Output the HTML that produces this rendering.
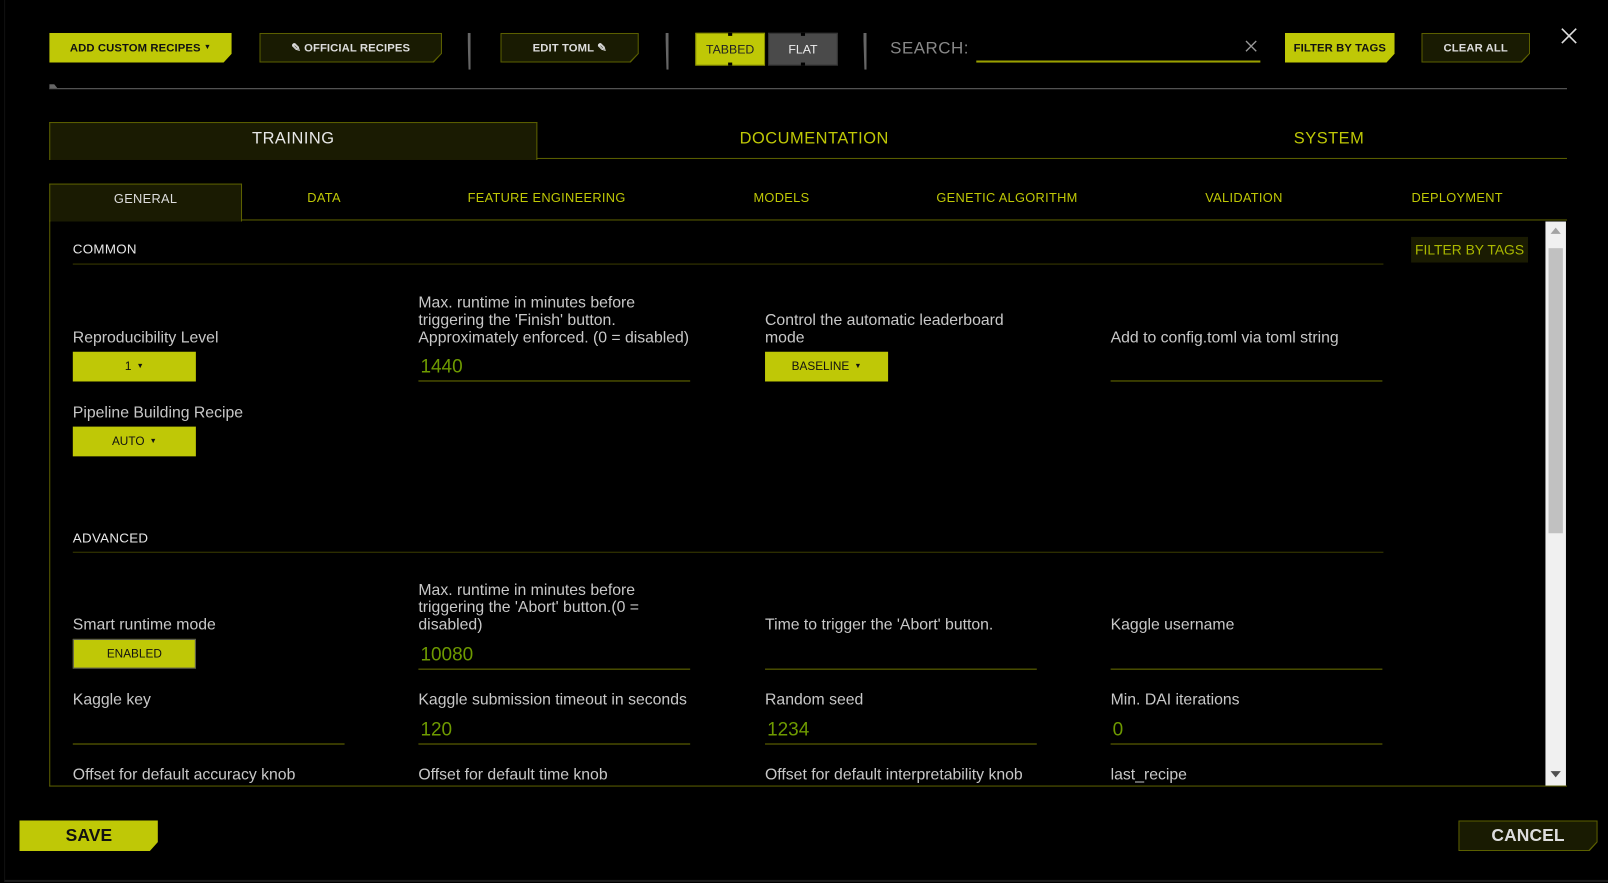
<!DOCTYPE html>
<html><head><meta charset="utf-8"><style>
*{margin:0;padding:0;box-sizing:border-box}
body{width:1608px;height:883px;background:#000;overflow:hidden;position:relative;font-family:"Liberation Sans Narrow","Liberation Sans",sans-serif;color:#ccc}
#w{position:absolute;left:0;top:0;width:1568px;height:861px;transform:scale(1.02551);transform-origin:0 0}
.a{position:absolute}
.btn{position:absolute;height:29px;font-size:11px;font-weight:bold;display:flex;align-items:center;justify-content:center;letter-spacing:0.1px;clip-path:polygon(0 0,100% 0,100% 70%,calc(100% - 8px) 100%,0 100%)}
.lime{background:#bfc806;color:#111}
.dark{background:#5c6000;color:#ddd}
.dark span{position:absolute;inset:1px;background:#191b02;display:flex;align-items:center;justify-content:center;clip-path:polygon(0 0,100% 0,100% 70%,calc(100% - 8px) 100%,0 100%)}
.sep{position:absolute;width:3px;height:36px;top:32px;background:#666;clip-path:polygon(0 0,100% 0,100% 100%,30% 100%,0 20%)}
.tab{position:absolute;font-size:16px;color:#bfc806;letter-spacing:0.5px;width:300px;text-align:center}
.st{position:absolute;font-size:12.5px;color:#bfc806;letter-spacing:0.3px;width:300px;text-align:center}
.lbl{position:absolute;font-family:"Liberation Sans",sans-serif;font-size:15.4px;line-height:17px;color:#c8c8c8;width:266px}
.ul{position:absolute;height:1px;background:#6b7000;width:265px}
.val{position:absolute;font-family:"Liberation Sans",sans-serif;font-size:18.5px;color:#6e9a00}
.sel{position:absolute;width:120px;height:29px;background:#bfc806;color:#111;font-size:11.5px;display:flex;align-items:center;justify-content:center}
.hd{position:absolute;font-size:13px;color:#e8e8e8;letter-spacing:0.3px}
</style></head><body>
<div id="w">
<div class="a" style="left:4px;top:0;width:1564px;height:860px;border-bottom:2px solid #1c1c1c;border-left:1px solid #111"></div>

<div class="btn lime" style="left:48px;top:32px;width:178px">ADD CUSTOM RECIPES&nbsp;<span style="font-size:7px">▼</span></div>
<div class="btn dark" style="left:253px;top:32px;width:178px"><span>✎ OFFICIAL RECIPES</span></div>
<div class="sep" style="left:456px"></div>
<div class="btn dark" style="left:488px;top:32px;width:135px"><span>EDIT TOML ✎</span></div>
<div class="sep" style="left:649px"></div>
<div class="a" style="left:678px;top:32px;width:68px;height:32px;background:#bfc806;border:1px solid #8a9000;color:#222;font-size:12px;display:flex;align-items:center;justify-content:center">TABBED</div>
<div class="a" style="left:749px;top:32px;width:68px;height:32px;background:#4a4a4a;border:1px solid #333;color:#eee;font-size:12px;display:flex;align-items:center;justify-content:center">FLAT</div>
<div class="a" style="left:710px;top:32px;width:4px;height:3px;background:#000"></div>
<div class="a" style="left:710px;top:61px;width:4px;height:3px;background:#000"></div>
<div class="a" style="left:781px;top:32px;width:4px;height:3px;background:#000"></div>
<div class="a" style="left:781px;top:61px;width:4px;height:3px;background:#000"></div>
<div class="sep" style="left:842px"></div>
<div class="a" style="left:868px;top:38px;font-size:16.5px;color:#888;letter-spacing:0.5px">SEARCH:</div>
<div class="a" style="left:952px;top:59px;width:277px;height:2px;background:#9aa000"></div>
<svg class="a" style="left:1214px;top:39px" width="12" height="12"><path d="M1 1L11 11M11 1L1 11" stroke="#999" stroke-width="1.3"/></svg>
<div class="btn lime" style="left:1253px;top:32px;width:107px">FILTER BY TAGS</div>
<div class="btn dark" style="left:1386px;top:32px;width:106px"><span>CLEAR ALL</span></div>
<svg class="a" style="left:1522px;top:27px" width="16" height="16"><path d="M1 1L15 15M15 1L1 15" stroke="#ddd" stroke-width="1.6"/></svg>
<div class="a" style="left:48px;top:86px;width:1480px;height:1px;background:#666"></div>
<div class="a" style="left:48px;top:82px;width:8px;height:4px;background:#666;clip-path:polygon(0 0,60% 0,100% 100%,0 100%)"></div>

<div class="a" style="left:48px;top:119px;width:476px;height:37px;background:#1a1b02;border:1px solid #5c6000;border-bottom:none"></div>
<div class="a" style="left:523px;top:154px;width:1005px;height:1px;background:#5c6000"></div>
<div class="tab" style="left:136px;top:127px;color:#e8e8e8">TRAINING</div>
<div class="tab" style="left:644px;top:127px">DOCUMENTATION</div>
<div class="tab" style="left:1146px;top:127px">SYSTEM</div>

<div class="a" style="left:48px;top:179px;width:188px;height:37px;background:#1a1b02;border:1px solid #5c6000;border-bottom:none"></div>
<div class="a" style="left:235px;top:214px;width:1293px;height:1px;background:#5c6000"></div>
<div class="st" style="left:-8px;top:187px;color:#ddd">GENERAL</div>
<div class="st" style="left:166px;top:186px">DATA</div>
<div class="st" style="left:383px;top:186px">FEATURE ENGINEERING</div>
<div class="st" style="left:612px;top:186px">MODELS</div>
<div class="st" style="left:832px;top:186px">GENETIC ALGORITHM</div>
<div class="st" style="left:1063px;top:186px">VALIDATION</div>
<div class="st" style="left:1271px;top:186px">DEPLOYMENT</div>

<div class="a" style="left:48px;top:215px;width:1480px;height:552px;border-left:1px solid #5c6000;border-bottom:1px solid #5c6000"></div>
<div class="a" style="left:1507px;top:216px;width:20px;height:550px;background:#f0f0f0"></div>
<div class="a" style="left:1510px;top:242px;width:14px;height:278px;background:#c1c1c1"></div>
<div class="a" style="left:1512px;top:222px;width:0;height:0;border-left:5px solid transparent;border-right:5px solid transparent;border-bottom:6px solid #a3a3a3"></div>
<div class="a" style="left:1512px;top:752px;width:0;height:0;border-left:5px solid transparent;border-right:5px solid transparent;border-top:6px solid #505050"></div>
<div class="a" style="left:1376px;top:231px;width:114px;height:25px;background:#1a1b02;color:#aab800;font-size:13.5px;display:flex;align-items:center;justify-content:center">FILTER BY TAGS</div>

<div class="hd" style="left:71px;top:235px">COMMON</div>
<div class="a" style="left:71px;top:257px;width:1278px;height:1px;background:#3a3c00"></div>

<div class="lbl" style="left:71px;top:321px">Reproducibility Level</div>
<div class="sel" style="left:71px;top:343px">1 <span style="font-size:7px;margin-left:5px">▼</span></div>
<div class="lbl" style="left:408px;top:287px">Max. runtime in minutes before triggering the 'Finish' button. Approximately enforced. (0 = disabled)</div>
<div class="val" style="left:410px;top:346px">1440</div>
<div class="ul" style="left:408px;top:371px"></div>
<div class="lbl" style="left:746px;top:304px">Control the automatic leaderboard mode</div>
<div class="sel" style="left:746px;top:343px">BASELINE <span style="font-size:7px;margin-left:5px">▼</span></div>
<div class="lbl" style="left:1083px;top:321px">Add to config.toml via toml string</div>
<div class="ul" style="left:1083px;top:371px"></div>
<div class="lbl" style="left:71px;top:394px">Pipeline Building Recipe</div>
<div class="sel" style="left:71px;top:416px">AUTO <span style="font-size:7px;margin-left:5px">▼</span></div>

<div class="hd" style="left:71px;top:517px">ADVANCED</div>
<div class="a" style="left:71px;top:538px;width:1278px;height:1px;background:#3a3c00"></div>

<div class="lbl" style="left:71px;top:601px">Smart runtime mode</div>
<div class="sel" style="left:71px;top:623px;border:1px solid #555">ENABLED</div>
<div class="lbl" style="left:408px;top:567px;width:232px">Max. runtime in minutes before triggering the 'Abort' button.(0 = disabled)</div>
<div class="val" style="left:410px;top:627px">10080</div>
<div class="ul" style="left:408px;top:652px"></div>
<div class="lbl" style="left:746px;top:601px">Time to trigger the 'Abort' button.</div>
<div class="ul" style="left:746px;top:652px"></div>
<div class="lbl" style="left:1083px;top:601px">Kaggle username</div>
<div class="ul" style="left:1083px;top:652px"></div>

<div class="lbl" style="left:71px;top:674px">Kaggle key</div>
<div class="ul" style="left:71px;top:725px"></div>
<div class="lbl" style="left:408px;top:674px">Kaggle submission timeout in seconds</div>
<div class="val" style="left:410px;top:700px">120</div>
<div class="ul" style="left:408px;top:725px"></div>
<div class="lbl" style="left:746px;top:674px">Random seed</div>
<div class="val" style="left:748px;top:700px">1234</div>
<div class="ul" style="left:746px;top:725px"></div>
<div class="lbl" style="left:1083px;top:674px">Min. DAI iterations</div>
<div class="val" style="left:1085px;top:700px">0</div>
<div class="ul" style="left:1083px;top:725px"></div>

<div class="lbl" style="left:71px;top:747px">Offset for default accuracy knob</div>
<div class="lbl" style="left:408px;top:747px">Offset for default time knob</div>
<div class="lbl" style="left:746px;top:747px">Offset for default interpretability knob</div>
<div class="lbl" style="left:1083px;top:747px">last_recipe</div>

<div class="btn lime" style="left:19px;top:800px;width:135px;height:30px;font-size:17px;justify-content:flex-start;padding-left:45px">SAVE</div>
<div class="btn dark" style="left:1422px;top:800px;width:136px;height:30px;font-size:17px"><span>CANCEL</span></div>
</div>
</body></html>
